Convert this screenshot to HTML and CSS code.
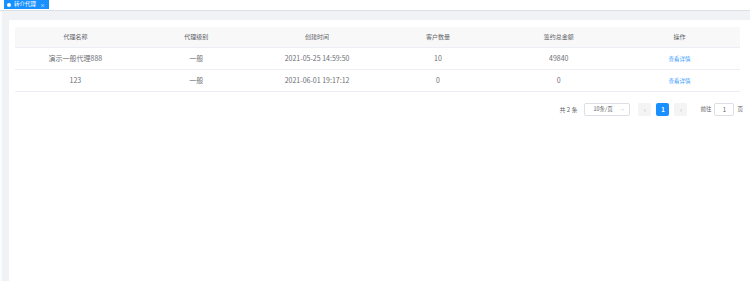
FILE: index.html
```html
<!DOCTYPE html>
<html lang="zh-CN">
<head>
    <meta charset="UTF-8">
    <meta name="viewport" content="width=device-width, initial-scale=1.0">
    <title>转介代理</title>
    <link rel="stylesheet" href="styles.css">
</head>
<body>
    <div class="tabs">
        <div class="tab active">
            <span class="tab-dot"></span>
            转介代理
            <span class="tab-close">×</span>
        </div>
    </div>

    <div class="main">
        <div class="card">
            <table class="table">
                <thead>
                    <tr>
                        <th>代理名称</th>
                        <th>代理级别</th>
                        <th>创建时间</th>
                        <th>客户数量</th>
                        <th>签约总金额</th>
                        <th>操作</th>
                    </tr>
                </thead>
                <tbody>
                    <tr>
                        <td>演示一般代理888</td>
                        <td>一般</td>
                        <td>2021-05-25 14:59:50</td>
                        <td>10</td>
                        <td>49840</td>
                        <td><a class="link">查看详情</a></td>
                    </tr>
                    <tr>
                        <td>123</td>
                        <td>一般</td>
                        <td>2021-06-01 19:17:12</td>
                        <td>0</td>
                        <td>0</td>
                        <td><a class="link">查看详情</a></td>
                    </tr>
                </tbody>
            </table>

            <div class="pagination">
                <span class="total">共 2 条</span>
                <div class="sizes">
                    <span>10条/页</span>
                    <svg class="caret" width="5" height="5" viewBox="0 0 10 10">
                        <path d="M2 3.5 L5 6.5 L8 3.5" fill="none" stroke="#c0c4cc" stroke-width="1.2"/>
                    </svg>
                </div>
                <div class="pager">
                    <button class="btn-nav">‹</button>
                    <button class="page current">1</button>
                    <button class="btn-nav">›</button>
                </div>
                <div class="jump">
                    前往
                    <span class="jump-input">1</span>
                    页
                </div>
            </div>
        </div>
    </div>
</body>
</html>
```

FILE: styles.css
```css
* {
    margin: 0;
    padding: 0;
    box-sizing: border-box;
}

body {
    font-family: "Noto Sans CJK SC", "Noto Sans", sans-serif;
    background: #fff;
    color: #606266;
    width: 750px;
    height: 281px;
    overflow: hidden;
    display: flex;
    flex-direction: column;
}

.tabs {
    height: 11px;
    padding-left: 4px;
    border-bottom: 1px solid #dcdfe6;
    background: #fff;
    display: flex;
}

.tab {
    height: 9px;
    padding: 0 4px 0 3px;
    display: flex;
    align-items: center;
    gap: 2px;
    font-size: 5.5px;
    line-height: 1;
}

.tab.active {
    background: #1890ff;
    color: #fff;
}

.tab-dot {
    width: 4px;
    height: 4px;
    border-radius: 50%;
    background: #fff;
    margin-right: 1px;
}

.tab-close {
    margin-left: 2px;
    font-size: 5px;
}

.main {
    flex: 1;
    background: #f0f2f5;
    padding: 9px 0 0 7px;
    border-left: 2px solid #fafbfc;
}

.card {
    background: #fff;
    height: 100%;
    padding: 7px 8px 0 6px;
}

.table {
    width: 725px;
    border-collapse: collapse;
    table-layout: fixed;
    font-size: 6px;
}

.table th {
    height: 20px;
    background: #f8f8f9;
    color: #606266;
    font-weight: 400;
    text-align: center;
    border-bottom: 1px solid #ebeef5;
}

.table td {
    height: 22px;
    text-align: center;
    color: #6b6e73;
    border-bottom: 1px solid #ebeef5;
    font-size: 7px;
}

.link {
    color: #409eff;
    font-size: 5.5px;
    cursor: pointer;
}

.pagination {
    width: 728px;
    margin-top: 11px;
    display: flex;
    justify-content: flex-end;
    align-items: center;
    font-size: 6px;
    color: #606266;
}

.total {
    margin-right: 7px;
}

.sizes {
    width: 46px;
    height: 13px;
    border: 1px solid #dcdfe6;
    border-radius: 2px;
    display: flex;
    align-items: center;
    justify-content: space-between;
    padding: 0 4px 0 8px;
    font-size: 5.5px;
    margin-right: 8px;
}

.pager {
    display: flex;
    gap: 5px;
    margin-right: 13px;
}

.pager button {
    width: 13px;
    height: 13px;
    border: none;
    border-radius: 2px;
    font-family: inherit;
    font-size: 6px;
    font-weight: 700;
    background: #f4f4f5;
    color: #c0c4cc;
}

.pager .page.current {
    background: #1890ff;
    color: #fff;
}

.jump {
    display: flex;
    align-items: center;
    gap: 3px;
    font-size: 5.5px;
}

.jump-input {
    width: 20px;
    height: 13px;
    border: 1px solid #dcdfe6;
    border-radius: 2px;
    display: flex;
    align-items: center;
    justify-content: center;
    font-size: 6px;
}
```
